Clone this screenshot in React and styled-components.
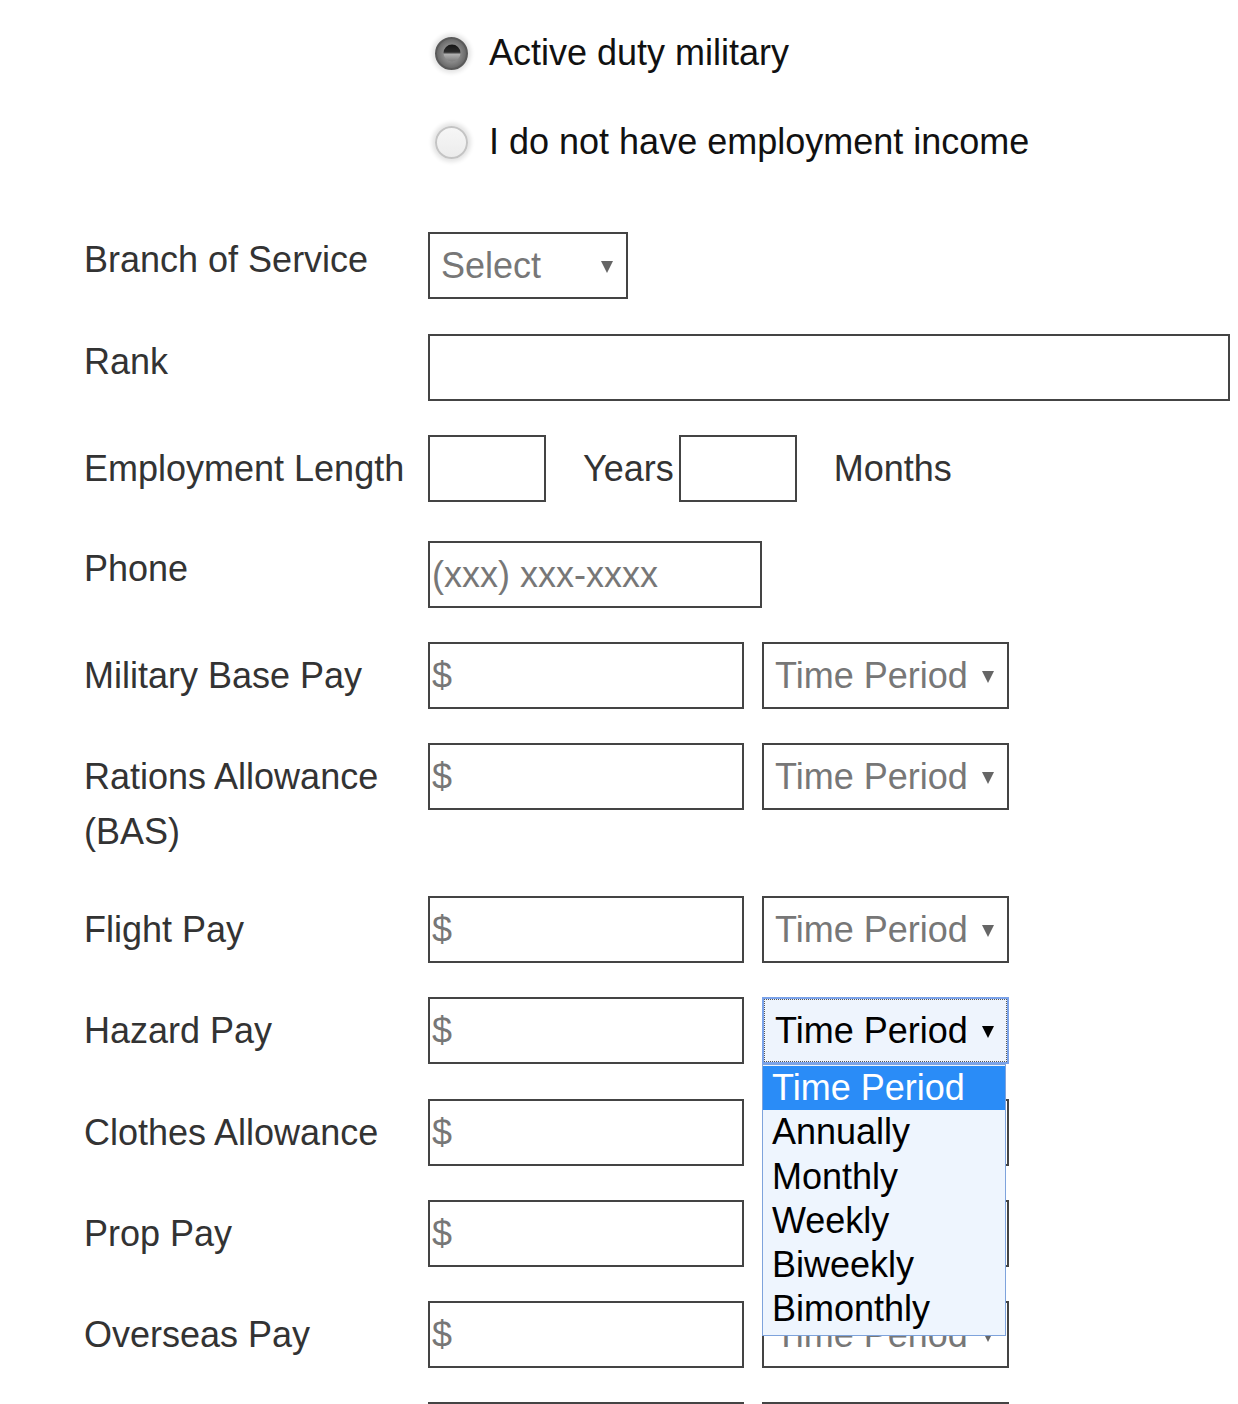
import React from "react";
import styled, { createGlobalStyle } from "styled-components";

const GlobalStyle = createGlobalStyle`
  body {
    margin: 0;
    background: #fff;
    font-family: "Liberation Sans", Arial, sans-serif;
  }
`;

const Page = styled.div`
  padding: 35px 0 0 84px;
  font-size: 36px;
  color: #333;
`;

const RadioGroup = styled.div`
  display: flex;
  flex-direction: column;
  gap: 53px;
  margin: 0 0 72px 344px;
`;

const RadioOption = styled.label`
  display: flex;
  align-items: center;
  height: 36px;
  line-height: 36px;
  color: #111;
`;

const RadioCircle = styled.span`
  position: relative;
  box-sizing: border-box;
  width: 33px;
  height: 33px;
  margin: 0 21px 0 7px;
  border-radius: 50%;
  border: 2px solid ${(p) => (p.$checked ? "#5a5a5a" : "#c4c4c4")};
  background: ${(p) =>
    p.$checked
      ? "radial-gradient(circle, #8a8a8a 40%, #6a6a6a 70%, #555 100%)"
      : "linear-gradient(#f6f6f6, #ececec)"};
  box-shadow: 0 0 4px 3px #e4e4e4;

  &::after {
    content: "";
    display: ${(p) => (p.$checked ? "block" : "none")};
    position: absolute;
    left: 50%;
    top: 50%;
    width: 17px;
    height: 17px;
    transform: translate(-50%, -50%);
    border-radius: 50%;
    background: linear-gradient(#151515 0%, #2c2c2c 45%, #b0b0b0 58%, #7d7d7d 100%);
  }
`;

const Row = styled.div`
  display: flex;
  align-items: flex-start;
  margin-bottom: ${(p) => p.$gap ?? 34}px;
`;

const Label = styled.div`
  width: 344px;
  flex-shrink: 0;
  line-height: 55px;
  padding-top: ${(p) => p.$pad ?? 0}px;
  color: #333;
`;

const Controls = styled.div`
  position: relative;
  display: flex;
  align-items: center;
  gap: ${(p) => p.$gap ?? 19}px;
`;

const TextInput = styled.input`
  box-sizing: border-box;
  width: ${(p) => p.$w}px;
  height: 67px;
  margin: 0;
  padding: 0 0 0 2px;
  border: 2px solid #444;
  border-radius: 0;
  background: #fff;
  font: 36px "Liberation Sans", Arial, sans-serif;
  color: #333;
  outline: none;

  &::placeholder {
    color: #777;
  }
`;

const Unit = styled.span`
  color: #333;
  margin: ${(p) => p.$m};
`;

const SelectBox = styled.div`
  box-sizing: border-box;
  width: ${(p) => p.$w}px;
  height: 67px;
  display: flex;
  align-items: center;
  justify-content: space-between;
  padding: 0 13px 0 11px;
  border: 2px solid ${(p) => (p.$focused ? "#7ba3ea" : "#444")};
  background: ${(p) => (p.$focused ? "#eef4fd" : "#fff")};
  color: ${(p) => (p.$focused ? "#000" : "#777")};
  outline: ${(p) => (p.$focused ? "1px dotted #555" : "none")};
  outline-offset: -3px;
`;

const Arrow = styled.span`
  width: 0;
  height: 0;
  border-left: 6px solid transparent;
  border-right: 6px solid transparent;
  border-top: 12px solid ${(p) => (p.$dark ? "#000" : "#666")};
  margin-top: 2px;
`;

const Dropdown = styled.ul`
  position: absolute;
  z-index: 5;
  top: 67px;
  left: 334px;
  box-sizing: border-box;
  width: 244px;
  margin: 0;
  padding: 1px 0 3px;
  list-style: none;
  background: #eef5fe;
  border: 1px solid #7ea3dc;
`;

const Option = styled.li`
  height: 44.3px;
  line-height: 43px;
  padding-left: 9px;
  color: ${(p) => (p.$active ? "#fff" : "#000")};
  background: ${(p) => (p.$active ? "#2a8cf7" : "transparent")};
`;

const periods = ["Time Period", "Annually", "Monthly", "Weekly", "Biweekly", "Bimonthly"];

const payRows = [
  { label: "Military Base Pay" },
  { label: "Rations Allowance (BAS)", gap: 37 },
  { label: "Flight Pay" },
  { label: "Hazard Pay", open: true, gap: 35 },
  { label: "Clothes Allowance" },
  { label: "Prop Pay" },
  { label: "Overseas Pay" },
  { label: "Other Pay" },
];

function PaySelect({ open }) {
  return (
    <>
      <SelectBox $w={247} $focused={open}>
        <span>Time Period</span>
        <Arrow $dark={open} />
      </SelectBox>
      {open && (
        <Dropdown>
          {periods.map((p, i) => (
            <Option key={p} $active={i === 0}>
              {p}
            </Option>
          ))}
        </Dropdown>
      )}
    </>
  );
}

export default function App() {
  return (
    <Page>
      <GlobalStyle />
      <RadioGroup>
        <RadioOption>
          <RadioCircle $checked />
          Active duty military
        </RadioOption>
        <RadioOption>
          <RadioCircle />
          I do not have employment income
        </RadioOption>
      </RadioGroup>

      <Row $gap={35}>
        <Label>Branch of Service</Label>
        <Controls>
          <SelectBox $w={200}>
            <span>Select</span>
            <Arrow />
          </SelectBox>
        </Controls>
      </Row>

      <Row>
        <Label>Rank</Label>
        <Controls>
          <TextInput $w={802} />
        </Controls>
      </Row>

      <Row $gap={39}>
        <Label $pad={6}>Employment Length</Label>
        <Controls $gap={0}>
          <TextInput $w={118} />
          <Unit $m="0 5px 0 37px">Years</Unit>
          <TextInput $w={118} />
          <Unit $m="0 0 0 37px">Months</Unit>
        </Controls>
      </Row>

      <Row>
        <Label>Phone</Label>
        <Controls>
          <TextInput $w={334} placeholder="(xxx) xxx-xxxx" />
        </Controls>
      </Row>

      {payRows.map((r) => (
        <Row key={r.label} $gap={r.gap}>
          <Label $pad={6}>{r.label}</Label>
          <Controls $gap={18}>
            <TextInput $w={316} placeholder="$" />
            <PaySelect open={r.open} />
          </Controls>
        </Row>
      ))}
    </Page>
  );
}
